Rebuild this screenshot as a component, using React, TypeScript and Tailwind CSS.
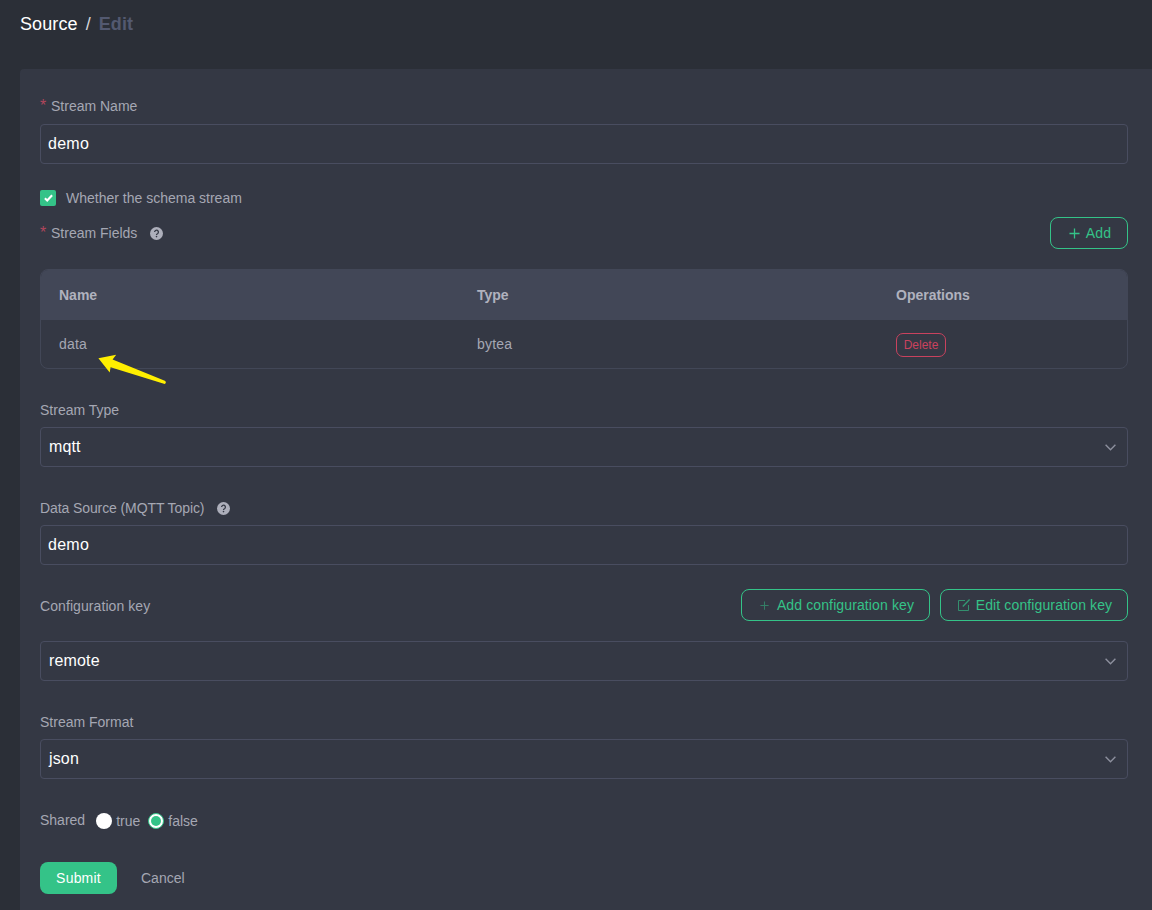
import React, { useState } from 'react';

interface FieldLabelProps {
  text: string;
  required?: boolean;
  help?: boolean;
  className?: string;
}

const HelpIcon: React.FC = () => (
  <svg className="w-[13px] h-[13px] ml-[13px]" viewBox="0 0 13 13">
    <circle cx="6.5" cy="6.5" r="6.5" fill="#adafbb" />
    <path d="M4.6 5.1a1.9 1.9 0 1 1 2.9 1.6c-.7.4-1 .6-1 1.2" fill="none" stroke="#343844" strokeWidth="1.3" />
    <circle cx="6.5" cy="9.6" r=".8" fill="#343844" />
  </svg>
);

const PlusIcon: React.FC<{ className: string }> = ({ className }) => (
  <svg className={className} viewBox="0 0 12 12" fill="none" stroke="currentColor">
    <path d="M6 .5v11M.5 6h11" strokeWidth="1.4" />
  </svg>
);

const FieldLabel: React.FC<FieldLabelProps> = ({ text, required, help, className = '' }) => (
  <div className={`flex items-center text-[#a5a7b3] ${className}`}>
    {required && <span className="w-[11px] text-base leading-5 text-[#b0465c]">*</span>}
    <span>{text}</span>
    {help && <HelpIcon />}
  </div>
);

const TextField: React.FC<{ initial: string }> = ({ initial }) => {
  const [value, setValue] = useState(initial);
  return (
    <input
      value={value}
      onChange={(e) => setValue(e.target.value)}
      className="block w-full h-10 px-[7px] rounded-[4px] border border-[#494d60] bg-transparent text-base text-white tracking-[0.25px] outline-none"
    />
  );
};

const SelectField: React.FC<{ value: string }> = ({ value }) => (
  <div className="flex items-center justify-between h-10 pl-2 pr-[11px] rounded-[4px] border border-[#494d60] text-base text-white tracking-[0.15px]">
    <span>{value}</span>
    <svg className="w-[11px] h-[7px]" viewBox="0 0 11 7" fill="none" stroke="#8d909e" strokeWidth="1.4">
      <path d="M.6.8l4.9 4.9L10.4.8" />
    </svg>
  </div>
);

const fields = [{ name: 'data', type: 'bytea' }];

export default function App() {
  const [checked, setChecked] = useState(true);
  const [shared, setShared] = useState('false');

  return (
    <div className="h-[910px] overflow-hidden pl-5 bg-[#2b2f37] font-['Liberation_Sans',Arial,sans-serif] text-sm">
      <div className="flex items-center h-[69px] pb-[21px] text-lg text-white tracking-[0.1px]">
        <span>Source</span>
        <span className="mx-2 text-[#d5d6da]">/</span>
        <span className="font-bold text-[#535970]">Edit</span>
      </div>

      <main className="h-[841px] pt-5 pl-5 pr-6 rounded-tl-[4px] bg-[#343844]">
        <div className="flex items-center h-[35px] pb-px">
          <FieldLabel text="Stream Name" required />
        </div>
        <TextField initial="demo" />

        <button className="flex items-center h-5 mt-6 text-[#a5a7b3]" onClick={() => setChecked(!checked)}>
          <span className="flex items-center justify-center w-4 h-4 mr-[10px] rounded-[2px] bg-[#34c388]">
            {checked && (
              <svg className="w-[9px] h-[8px]" viewBox="0 0 9 8" fill="none" stroke="#fff" strokeWidth="2.1">
                <path d="M.9 4.2l2.3 2.2L8.1 1.2" />
              </svg>
            )}
          </span>
          Whether the schema stream
        </button>

        <div className="flex items-center justify-between h-8 mt-[9px]">
          <FieldLabel text="Stream Fields" required help />
          <button className="flex items-center justify-center w-[78px] h-8 gap-[6px] pl-[2px] rounded-[8px] border border-[#34c388] text-[#34c388] tracking-[0.2px]">
            <PlusIcon className="w-[11px] h-[11px]" />
            Add
          </button>
        </div>

        <div className="mt-5 h-[100px] rounded-[8px] border border-[#424757] overflow-hidden text-[#a5a7b3]">
          <div className="grid grid-cols-[418px_418px_1fr] items-center h-[50px] pl-[18px] bg-[#424757] font-bold text-[#b0b2be]">
            <span>Name</span>
            <span>Type</span>
            <span className="pl-px">Operations</span>
          </div>
          {fields.map((field) => (
            <div key={field.name} className="grid grid-cols-[418px_418px_1fr] items-center h-12 pl-[18px] tracking-[0.2px]">
              <span>{field.name}</span>
              <span>{field.type}</span>
              <span className="pt-[2px] pl-px">
                <button className="block w-[50px] h-6 rounded-[7px] border border-[#c9425e] text-xs text-[#c9425e] tracking-normal">
                  Delete
                </button>
              </span>
            </div>
          ))}
        </div>

        <div className="flex items-center h-[34px] mt-6">
          <FieldLabel text="Stream Type" />
        </div>
        <SelectField value="mqtt" />

        <div className="flex items-center h-[34px] mt-6">
          <FieldLabel text="Data Source (MQTT Topic)" help className="tracking-[-0.1px]" />
        </div>
        <TextField initial="demo" />

        <div className="flex items-center justify-between h-8 mt-6">
          <FieldLabel text="Configuration key" className="pt-[2px] tracking-[0.08px]" />
          <div className="flex gap-[10px] text-[#34c388] tracking-[0.12px]">
            <button className="flex items-center justify-center w-[189px] h-8 gap-2 pl-[3px] rounded-[8px] border border-[#34c388]">
              <PlusIcon className="w-[9px] h-[9px] opacity-50" />
              Add configuration key
            </button>
            <button className="flex items-center justify-center w-[188px] h-8 gap-[6px] pl-[2px] rounded-[8px] border border-[#34c388]">
              <svg className="w-3 h-3 opacity-70" viewBox="0 0 12 12" fill="none" stroke="currentColor">
                <path d="M7 1.5H.5v10h10V6" strokeWidth=".9" />
                <path d="M4.8 7.4L11.6.5" strokeWidth="1.4" />
              </svg>
              Edit configuration key
            </button>
          </div>
        </div>
        <div className="mt-5">
          <SelectField value="remote" />
        </div>

        <div className="flex items-center h-[34px] mt-6">
          <FieldLabel text="Stream Format" />
        </div>
        <SelectField value="json" />

        <div className="flex items-center h-[34px] mt-6">
          <FieldLabel text="Shared" />
          <div className="flex items-center gap-2 pt-[2px] ml-[11px] text-[#a5a7b3]">
            {['true', 'false'].map((option) => (
              <button key={option} className="flex items-center gap-1" onClick={() => setShared(option)}>
                <span
                  className={
                    shared === option
                      ? 'flex items-center justify-center w-4 h-4 rounded-full border border-[#34c388] bg-white'
                      : 'w-4 h-4 rounded-full bg-white'
                  }
                >
                  {shared === option && <span className="w-[10px] h-[10px] rounded-full bg-[#34c388]" />}
                </span>
                {option}
              </button>
            ))}
          </div>
        </div>

        <div className="flex items-center mt-[25px]">
          <button className="w-[77px] h-8 rounded-[8px] bg-[#34c388] text-white tracking-[0.2px]">Submit</button>
          <button className="ml-6 h-8 text-[#a5a7b3]">Cancel</button>
        </div>
      </main>

      {/* pointer over the field name */}
      <svg className="absolute left-[98px] top-[354px] w-[70px] h-[32px]" viewBox="98 354 70 32">
        <path
          d="M98.4 358.3L116.2 354.8L112.6 359.6L164.8 380.8Q167 382.5 164.7 384L110.6 367.2L109.7 372.4Z"
          fill="#ffef00"
        />
      </svg>
    </div>
  );
}
